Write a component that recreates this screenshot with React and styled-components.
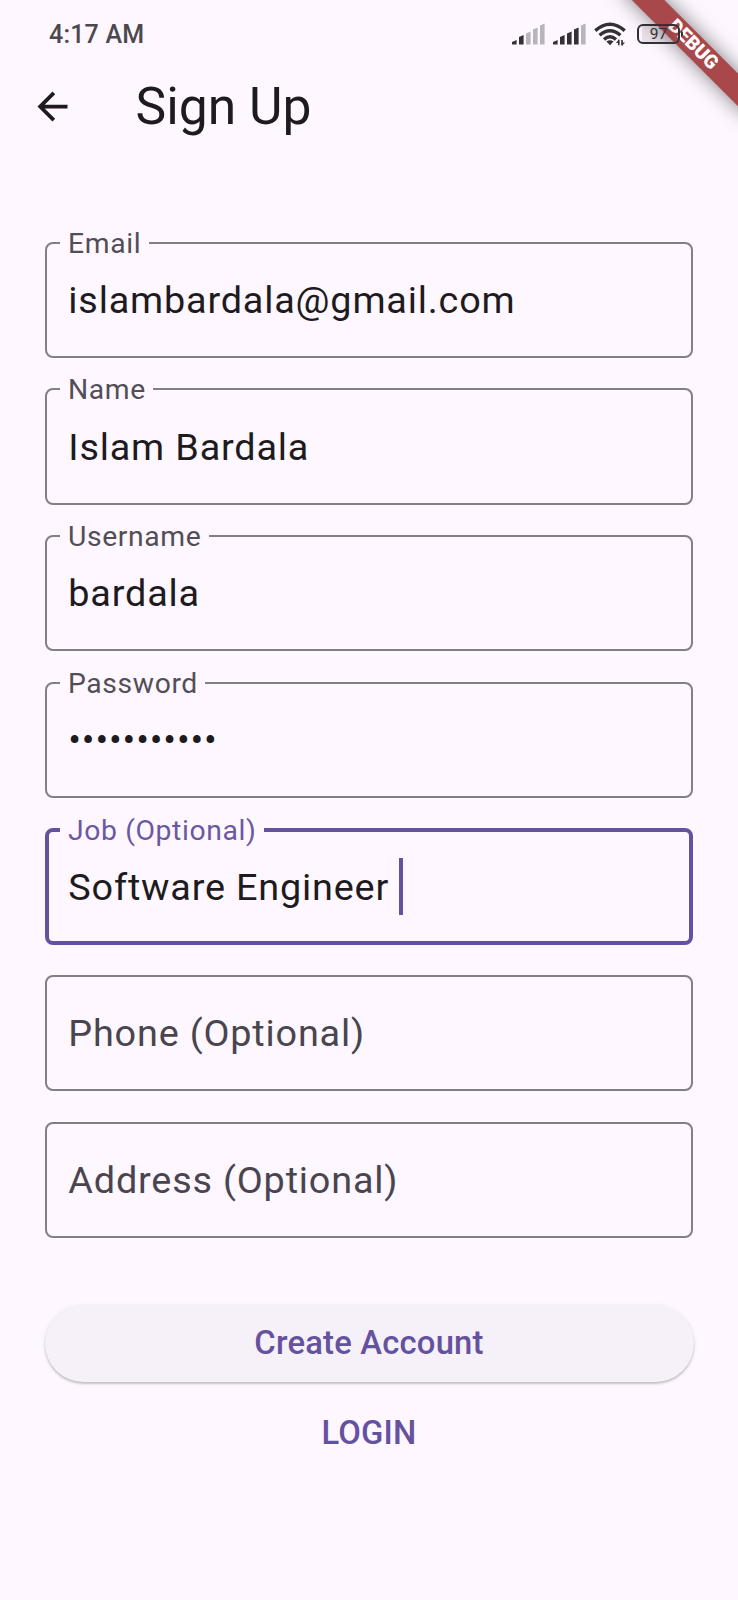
import React from 'react';
import styled, { createGlobalStyle } from 'styled-components';

const GlobalStyle = createGlobalStyle`
  * { box-sizing: border-box; }
  body { margin: 0; background: #fef7ff; }
`;

const Screen = styled.div`
  position: relative;
  width: 738px;
  height: 1600px;
  overflow: hidden;
  display: flex;
  flex-direction: column;
  background: #fef7ff;
  color: #1d1b20;
  font-family: Roboto, sans-serif;
`;

const StatusBar = styled.div`
  display: flex;
  align-items: center;
  justify-content: space-between;
  height: 68px;
  padding: 0 58px 0 49px;
`;

const Clock = styled.span`
  font-size: 25px;
  font-weight: 500;
  letter-spacing: 0.2px;
  color: #4b484e;
`;

const StatusIcons = styled.div`
  position: relative;
  z-index: 2;
  display: flex;
  align-items: center;
  gap: 8px;
  height: 66px;
`;

const Battery = styled.div`
  position: relative;
  width: 43px;
  height: 20px;
  margin-left: 2px;
  border: 2px solid #343036;
  border-radius: 6px;
  display: flex;
  align-items: center;
  justify-content: center;
  font-size: 15.5px;
  font-weight: 400;
  line-height: 15px;
  color: #343036;
  background: linear-gradient(90deg, transparent 3px, rgba(60, 50, 60, 0.1) 3px, rgba(60, 50, 60, 0.1) 35px, transparent 35px);

  &::after {
    content: '';
    position: absolute;
    right: -5px;
    top: 5px;
    width: 2px;
    height: 6px;
    background: #343036;
    border-radius: 0 2px 2px 0;
  }
`;

const BannerClip = styled.div`
  position: absolute;
  inset: 0 0 auto auto;
  width: 160px;
  height: 160px;
  overflow: hidden;
  z-index: 1;
`;

const Banner = styled.div`
  position: absolute;
  left: 70px;
  top: 52.2px;
  width: 180px;
  height: 22.5px;
  transform-origin: 90px -52.2px;
  transform: rotate(45deg);
  background: #a9484b;
  box-shadow: 0 0 20px rgba(0, 0, 0, 0.5);
  color: #fff;
  font-size: 19.2px;
  font-weight: 900;
  line-height: 22.5px;
  text-align: center;
`;

const AppBar = styled.header`
  display: flex;
  align-items: center;
  height: 77px;
  padding-left: 30px;
`;

const BackIcon = styled.svg`
  width: 45px;
  height: 45px;
  fill: #1d1b20;
`;

const Title = styled.h1`
  margin: 0 0 0 60.5px;
  font-size: 51.6px;
  font-weight: 400;
  line-height: 60px;
`;

const Form = styled.form`
  display: flex;
  flex-direction: column;
  padding: 96.5px 45px 0;
`;

const Fields = styled.div`
  display: flex;
  flex-direction: column;
  gap: 30.3px;
`;

const Field = styled.fieldset`
  display: block;
  min-width: 0;
  height: 116.4px;
  margin: 0;
  padding: 0 ${(p) => (p.$focused ? 11 : 13)}px;
  border: ${(p) => (p.$focused ? '4px solid #65529f' : '2px solid #847e87')};
  border-radius: 8px;
`;

const Label = styled.legend`
  height: ${(p) => (p.$focused ? 4 : 2)}px;
  padding: 0 7.5px 0 8px;
  font-size: 28.3px;
  letter-spacing: 0.62px;
  line-height: ${(p) => (p.$focused ? 6 : 4)}px;
  white-space: nowrap;
  color: ${(p) => (p.$focused ? '#6b58a3' : '#524e57')};
`;

const Value = styled.div`
  display: flex;
  align-items: center;
  height: ${(p) => (p.$focused ? 109 : 113)}px;
  padding-left: 8.3px;
  font-size: 37.8px;
  letter-spacing: 0.82px;
  white-space: pre;
  color: ${(p) => (p.$placeholder ? '#49454f' : '#1d1b20')};
`;

const Caret = styled.span`
  width: 4px;
  height: 57px;
  background: #65529f;
`;

const CreateButton = styled.button`
  height: 77px;
  margin: 66.7px -0.5px 0;
  border: 0;
  border-radius: 39px;
  background: #f6f1f9;
  box-shadow: 0 2px 2px rgba(0, 0, 0, 0.17), 0 1px 4px rgba(0, 0, 0, 0.1);
  color: #65529f;
  font: 500 32.8px/38px Roboto, sans-serif;
  letter-spacing: 0.2px;
`;

const LoginButton = styled.button`
  align-self: center;
  height: 76px;
  margin-top: 13.5px;
  padding: 0 22px;
  border: 0;
  background: none;
  color: #65529f;
  font: 500 32.8px/38px Roboto, sans-serif;
  letter-spacing: 0.2px;
`;

const barTops = [17, 12, 8.5, 4.5, 0.5];

function Signal({ level }) {
  return (
    <svg width="33" height="22" viewBox="0 0 33 22">
      {barTops.map((top, i) => (
        <path
          key={top}
          d={`M${i * 7} ${top + 2}L${i * 7 + 4.6} ${top}V21.5H${i * 7}Z`}
          fill={i < level ? '#343036' : '#b9b3bc'}
        />
      ))}
    </svg>
  );
}

function Wifi() {
  return (
    <svg width="33" height="24" viewBox="0 0 33 24" fill="none" stroke="#343036" strokeWidth="3.4">
      <path d="M1.3 8.6Q16 -4.2 30.7 8.6" />
      <path d="M5.6 13.2Q16 4.2 26.4 13.2" />
      <path d="M10 17.6Q16 12 22 17.6" />
      <path d="M16 23.2L12.4 19.6Q16 16.8 19.6 19.6Z" fill="#343036" stroke="none" />
      <path d="M24.8 17.8V23.2M28 18V23.4" strokeWidth="1.6" />
      <path d="M22 21L24.8 17.6V21ZM28 20.4H31L28 23.8Z" fill="#343036" stroke="none" />
    </svg>
  );
}

const fields = [
  { label: 'Email', value: 'islambardala@gmail.com' },
  { label: 'Name', value: 'Islam Bardala' },
  { label: 'Username', value: 'bardala' },
  { label: 'Password', value: '•••••••••••' },
  { label: 'Job (Optional)', value: 'Software Engineer ', focused: true },
  { label: 'Phone (Optional)' },
  { label: 'Address (Optional)' },
];

export default function App() {
  return (
    <Screen>
      <GlobalStyle />
      <StatusBar>
        <Clock>4:17 AM</Clock>
        <StatusIcons>
          <Signal level={2} />
          <Signal level={4} />
          <Wifi />
          <Battery>97</Battery>
        </StatusIcons>
      </StatusBar>
      <BannerClip>
        <Banner>DEBUG</Banner>
      </BannerClip>
      <AppBar>
        <BackIcon viewBox="0 0 24 24">
          <path d="M20 11H7.83l5.59-5.59L12 4l-8 8 8 8 1.41-1.41L7.83 13H20v-2z" />
        </BackIcon>
        <Title>Sign Up</Title>
      </AppBar>
      <Form>
        <Fields>
          {fields.map(({ label, value, focused }) => (
            <Field key={label} $focused={focused}>
              {value && <Label $focused={focused}>{label}</Label>}
              <Value $placeholder={!value} $focused={focused}>
                {value || label}
                {focused && <Caret />}
              </Value>
            </Field>
          ))}
        </Fields>
        <CreateButton type="button">Create Account</CreateButton>
        <LoginButton type="button">LOGIN</LoginButton>
      </Form>
    </Screen>
  );
}
